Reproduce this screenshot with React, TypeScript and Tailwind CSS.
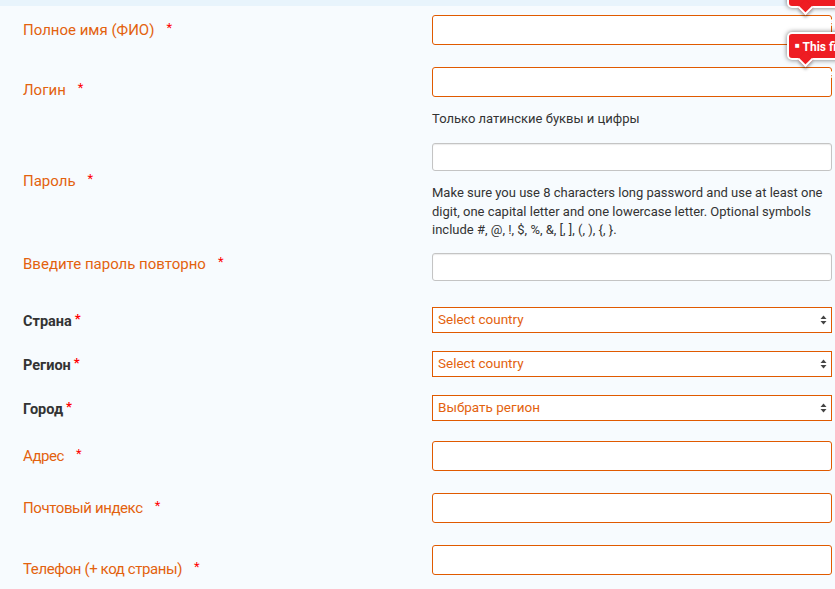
import React from "react";

const ORANGE = "text-[#e3620e]";

function Star({ gap = true }: { gap?: boolean }) {
  return (
    <span className={`${gap ? "ml-[12px]" : "ml-[3px]"} relative -top-[3px] text-[13px] leading-none text-[#ff0000]`}>
      *
    </span>
  );
}

function Tooltip() {
  return (
    <div className="absolute left-[355px] -top-[35px] z-10">
      <div className="relative h-[28px] w-[120px] rounded-[5px] border-2 border-white bg-[#ee1d23] pl-[6px] shadow-[0_0_5px_rgba(0,0,0,0.55)]">
        <span className="text-[12px] font-bold leading-[24px] text-white">
          <span className="relative -top-[3px] text-[8px]">■</span> This field is required
        </span>
        <div className="absolute left-[11px] -bottom-[7px] h-[11px] w-[11px] rotate-45 border-b-2 border-r-2 border-white bg-[#ee1d23] shadow-[2px_2px_3px_rgba(0,0,0,0.3)]" />
      </div>
    </div>
  );
}

function TextInput({ tooltip, gray, h = "h-[30px]" }: { tooltip?: boolean; gray?: boolean; h?: string }) {
  return (
    <div className="relative">
      {tooltip && <Tooltip />}
      <div
        className={`${h} w-[400px] rounded-[3px] bg-white ${
          gray ? "border border-[#c4c4c4] shadow-[inset_0_1px_1px_rgba(0,0,0,0.08)]" : "border-[1.5px] border-[#e05a00]"
        }`}
      />
    </div>
  );
}

function SelectBox({ text }: { text: string }) {
  return (
    <div className="flex h-[26px] w-[400px] items-center justify-between border-[1.5px] border-[#e05a00] bg-white pl-[5px] pr-[4px]">
      <span className={`text-[13.5px] ${ORANGE}`}>{text}</span>
      <svg width="7" height="10" viewBox="0 0 7 10" className="fill-[#444]">
        <polygon points="3.5,0.5 6.5,4 0.5,4" />
        <polygon points="3.5,9.5 6.5,6 0.5,6" />
      </svg>
    </div>
  );
}

function Row({
  label,
  pt,
  bold,
  narrow,
  children,
}: {
  label: string;
  pt: string;
  bold?: boolean;
  narrow?: boolean;
  children: React.ReactNode;
}) {
  return (
    <div className="flex">
      <div className={`w-[432px] shrink-0 pl-[23px] leading-[20px] ${pt}`}>
        {bold ? (
          <span className="text-[14.5px] font-bold leading-[20px] text-[#333]">
            {label}
            <Star gap={false} />
          </span>
        ) : (
          <span className={`text-[15px] leading-[20px] ${ORANGE} ${narrow ? "tracking-[-0.4px]" : ""}`}>
            {label}
            <Star />
          </span>
        )}
      </div>
      <div className="flex flex-col">{children}</div>
    </div>
  );
}

export default function App() {
  return (
    <div
      className="h-[589px] w-[835px] overflow-hidden bg-[#f7fbfe]"
      style={{ fontFamily: "Roboto, 'Noto Sans', sans-serif" }}
    >
      <div className="h-[6px] bg-[#e8f4fc]" />

      <Row label="Полное имя (ФИО)" pt="pt-[14px]">
        <div className="mt-[9px]">
          <TextInput tooltip />
        </div>
      </Row>

      <Row label="Логин" pt="pt-[35px]">
        <div className="mt-[22px]">
          <TextInput tooltip />
        </div>
        <p className="mt-[13px] text-[13px] leading-[18px] text-[#333]">Только латинские буквы и цифры</p>
      </Row>

      <Row label="Пароль" pt="pt-[43px]">
        <div className="mt-[15px]">
          <TextInput gray h="h-[28px]" />
        </div>
        <p className="mt-[13px] w-[395px] text-[13px] leading-[18.5px] text-[#333]">
          Make sure you use 8 characters long password and use at least one digit, one capital letter and one
          lowercase letter. Optional symbols include #, @, !, $, %, &amp;, [, ], (, ), {"{"}, {"}"}.
        </p>
      </Row>

      <Row label="Введите пароль повторно" pt="pt-[14px]">
        <div className="mt-[13px]">
          <TextInput gray h="h-[28px]" />
        </div>
      </Row>

      <Row label="Страна" pt="pt-[30px]" bold>
        <div className="mt-[26px]">
          <SelectBox text="Select country" />
        </div>
      </Row>

      <Row label="Регион" pt="pt-[22px]" bold>
        <div className="mt-[18px]">
          <SelectBox text="Select country" />
        </div>
      </Row>

      <Row label="Город" pt="pt-[22px]" bold>
        <div className="mt-[18px]">
          <SelectBox text="Выбрать регион" />
        </div>
      </Row>

      <Row label="Адрес" pt="pt-[25px]" narrow>
        <div className="mt-[20px]">
          <TextInput />
        </div>
      </Row>

      <Row label="Почтовый индекс" pt="pt-[27px]" narrow>
        <div className="mt-[22px]">
          <TextInput />
        </div>
      </Row>

      <Row label="Телефон (+ код страны)" pt="pt-[36px]" narrow>
        <div className="mt-[22px]">
          <TextInput />
        </div>
      </Row>
    </div>
  );
}
